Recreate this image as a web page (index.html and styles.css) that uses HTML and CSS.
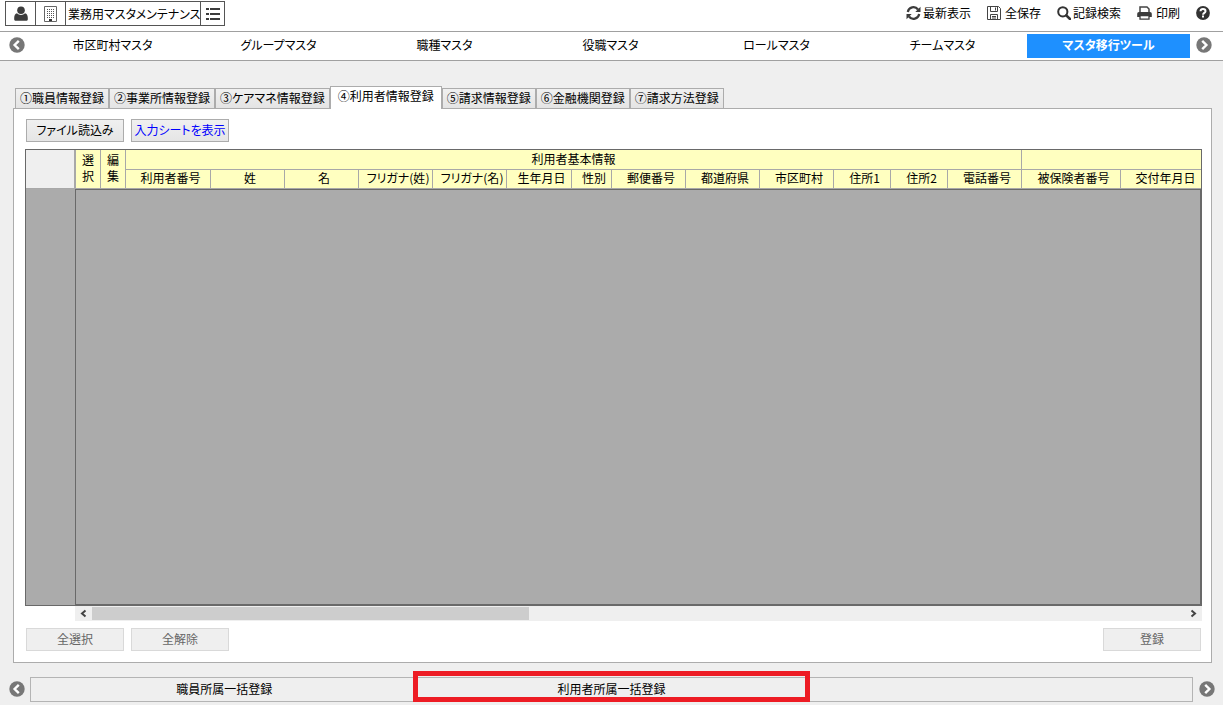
FILE: index.html
```html
<!DOCTYPE html>
<html lang="ja">
  <head>
    <meta charset="UTF-8" />
    <meta name="viewport" content="width=device-width, initial-scale=1.0" />
    <title>業務用マスタメンテナンス</title>
    <link rel="stylesheet" href="styles.css">
  </head>
  <body>
    <header class="topbar">
      <div class="title-group">
        <button type="button" class="title-btn" aria-label="職員">
          <svg width="16" height="16" viewBox="0 0 16 16" fill="#3c3c3c"><circle cx="8" cy="4.3" r="3.8" /><path d="M4 7.300C2.200 7.800 1.200 9.400 1.200 12v1.200c0 1 .8 1.600 1.800 1.600h10c1 0 1.800-.6 1.800-1.600V12c0-2.600-1-4.200-2.800-4.700C10.900 8.400 9.500 9 8 9s-2.900-.6-4-1.700z" /></svg>
        </button>
        <button type="button" class="title-btn" aria-label="事業所">
          <svg width="13" height="16" viewBox="0 0 13 16"><path d="M.5 .5h12v15H.5z" fill="#fff" stroke="#666" /><path d="M3 3.500h8M3 5.500h8M3 7.500h8M3 9.500h8M3 11.500h8" stroke="#555" stroke-dasharray="1 1" /><path d="M5 13h3v2H5z" fill="#333" /></svg>
        </button>
        <h1 class="title">業務用マスタメンテナンス</h1>
        <button type="button" class="title-btn list-btn" aria-label="一覧">
          <svg width="14" height="12" viewBox="0 0 14 12" fill="#3c3c3c"><path d="M0 0h3v2H0zM4 0h10v2H4zM0 5h3v2H0zM4 5h10v2H4zM0 10h3v2H0zM4 10h10v2H4z" /></svg>
        </button>
      </div>
      <div class="tools">
        <button type="button" class="tool">
          <svg width="15" height="14" viewBox="0 0 15 14"><path d="M1.800 6A5.700 5.700 0 0 1 12 3.500M13.200 8A5.700 5.700 0 0 1 3 10.500" fill="none" stroke="#3c3c3c" stroke-width="2.200" /><path d="M14.500 .8v5.200H9.300zM.5 13.200V8h5.200z" fill="#3c3c3c" /></svg>
          最新表示
        </button>
        <button type="button" class="tool save">
          <svg width="14" height="14" viewBox="0 0 14 14" fill="none" stroke="#444"><path d="M.5 .5h11l2 2v11H.5zM3.500 .5v5h7v-5M3.500 13.500v-5h7v5" /><path d="M8.500 1.500v3M5 10.500h4M5 12h4" /></svg>
          全保存
        </button>
        <button type="button" class="tool">
          <svg width="14" height="14" viewBox="0 0 14 14" fill="none" stroke="#333"><circle cx="5.800" cy="5.800" r="4.600" stroke-width="2" /><path d="M9.300 9.300l3.700 3.700" stroke-width="2.500" stroke-linecap="round" /></svg>
          記録検索
        </button>
        <button type="button" class="tool print">
          <svg width="15" height="14" viewBox="0 0 15 14"><path d="M3 6V1h7l2 2v3" fill="none" stroke="#444" stroke-width="1.500" /><path d="M2 6h11a1.800 1.800 0 0 1 1.800 1.800V11H.2V7.800A1.800 1.800 0 0 1 2 6z" fill="#3c3c3c" /><path d="M3 9.500h9v3.700H3z" fill="#fff" stroke="#3c3c3c" stroke-width="1.300" /></svg>
          印刷
        </button>
        <button type="button" class="tool" aria-label="ヘルプ">
          <svg width="14" height="14" viewBox="0 0 14 14"><circle cx="7" cy="7" r="6.900" fill="#333" /><path d="M4.500 5.300C4.600 3.900 5.600 3.100 7 3.100c1.400 0 2.500.8 2.500 2.100 0 1.700-2.400 1.700-2.400 3.500" fill="none" stroke="#fff" stroke-width="2" /><path d="M6 9.600h2v1.800H6z" fill="#fff" /></svg>
        </button>
      </div>
    </header>

    <nav class="master-nav">
      <button type="button" class="arrow" aria-label="前へ">
        <svg width="16" height="16" viewBox="0 0 16 16"><circle cx="8" cy="8" r="7.700" fill="#777" /><path d="M9.800 3.800L5.600 8l4.200 4.200" fill="none" stroke="#fff" stroke-width="2.400" /></svg>
      </button>
      <div class="master-list">
        <a href="#" class="master">市区町村マスタ</a>
        <a href="#" class="master">グループマスタ</a>
        <a href="#" class="master">職種マスタ</a>
        <a href="#" class="master">役職マスタ</a>
        <a href="#" class="master">ロールマスタ</a>
        <a href="#" class="master">チームマスタ</a>
        <a href="#" class="master active">マスタ移行ツール</a>
      </div>
      <button type="button" class="arrow next" aria-label="次へ">
        <svg width="16" height="16" viewBox="0 0 16 16"><circle cx="8" cy="8" r="7.700" fill="#777" /><path d="M6.200 3.800L10.400 8l-4.200 4.200" fill="none" stroke="#fff" stroke-width="2.400" /></svg>
      </button>
    </nav>

    <main class="content">
      <div class="tabs" role="tablist">
        <button type="button" class="tab" role="tab">①職員情報登録</button>
        <button type="button" class="tab" role="tab">②事業所情報登録</button>
        <button type="button" class="tab" role="tab">③ケアマネ情報登録</button>
        <button type="button" class="tab active" role="tab" aria-selected="true">④利用者情報登録</button>
        <button type="button" class="tab" role="tab">⑤請求情報登録</button>
        <button type="button" class="tab" role="tab">⑥金融機関登録</button>
        <button type="button" class="tab" role="tab">⑦請求方法登録</button>
      </div>

      <section class="panel">
        <div class="actions">
          <button type="button" class="btn">ファイル読込み</button>
          <button type="button" class="btn sheet">入力シートを表示</button>
        </div>

        <div class="grid">
          <table class="grid-head">
            <colgroup>
              <col class="w-row" />
              <col class="w-check" span="2" />
              <col class="w-number" />
              <col class="w-text" span="4" />
              <col class="w-birth" />
              <col class="w-sex" />
              <col class="w-text" span="3" />
              <col class="w-address" span="2" />
              <col class="w-text" />
              <col class="w-insured" />
              <col class="w-date" />
            </colgroup>
            <thead>
              <tr>
                <td rowspan="2" class="corner"></td>
                <th rowspan="2" class="check">選<br />択</th>
                <th rowspan="2" class="check">編<br />集</th>
                <th colspan="13" class="group">利用者基本情報</th>
                <th colspan="2" class="group"></th>
              </tr>
              <tr>
                <th>利用者番号</th>
                <th>姓</th>
                <th>名</th>
                <th>フリガナ(姓)</th>
                <th>フリガナ(名)</th>
                <th>生年月日</th>
                <th>性別</th>
                <th>郵便番号</th>
                <th>都道府県</th>
                <th>市区町村</th>
                <th>住所1</th>
                <th>住所2</th>
                <th>電話番号</th>
                <th>被保険者番号</th>
                <th>交付年月日</th>
              </tr>
            </thead>
          </table>
          <div class="grid-body">
            <div class="gutter"></div>
            <div class="canvas"></div>
          </div>
        </div>
        <div class="scrollbar">
          <svg class="scroll-arrow" width="17" height="15" viewBox="0 0 17 15"><path d="M10.500 4.500L7 7.500l3.500 3" fill="none" stroke="#444" stroke-width="2" /></svg>
          <div class="track"><div class="thumb"></div></div>
          <svg class="scroll-arrow" width="17" height="15" viewBox="0 0 17 15"><path d="M6.500 4.500L10 7.500l-3.500 3" fill="none" stroke="#444" stroke-width="2" /></svg>
        </div>

        <div class="actions bottom">
          <button type="button" class="btn" disabled>全選択</button>
          <button type="button" class="btn" disabled>全解除</button>
          <button type="button" class="btn submit" disabled>登録</button>
        </div>
      </section>
    </main>

    <footer class="footer-nav">
      <button type="button" class="arrow" aria-label="前へ">
        <svg width="16" height="16" viewBox="0 0 16 16"><circle cx="8" cy="8" r="7.700" fill="#777" /><path d="M9.800 3.800L5.600 8l4.200 4.200" fill="none" stroke="#fff" stroke-width="2.400" /></svg>
      </button>
      <div class="footer-list">
        <button type="button" class="footer-btn">職員所属一括登録</button>
        <button type="button" class="footer-btn marked">利用者所属一括登録</button>
        <div class="footer-btn"></div>
      </div>
      <button type="button" class="arrow next" aria-label="次へ">
        <svg width="16" height="16" viewBox="0 0 16 16"><circle cx="8" cy="8" r="7.700" fill="#777" /><path d="M6.200 3.800L10.400 8l-4.200 4.200" fill="none" stroke="#fff" stroke-width="2.400" /></svg>
      </button>
    </footer>
  </body>
</html>
```

FILE: styles.css
```css
* {
  margin: 0;
  padding: 0;
  box-sizing: border-box;
}

body {
  display: flex;
  flex-direction: column;
  min-height: 100vh;
  background-color: #efefef;
  border-right: 5px solid #ffffff;
  color: #000000;
  font-family: "Noto Sans CJK JP", sans-serif;
  font-size: 12px;
  line-height: 16px;
  font-feature-settings: "palt";
}

button {
  border: none;
  background: none;
  color: inherit;
  font: inherit;
  font-feature-settings: inherit;
  white-space: nowrap;
  cursor: pointer;
}

svg {
  display: block;
  flex-shrink: 0;
}

.topbar {
  display: flex;
  justify-content: space-between;
  align-items: flex-start;
  height: 31px;
  padding: 1px 13px 0 5px;
  background-color: #ffffff;
}

.title-group {
  display: flex;
  height: 25px;
  border: 1px solid #555555;
}

.title-btn {
  display: flex;
  justify-content: center;
  align-items: center;
  width: 30px;
  border-right: 1px solid #555555;
}

.title {
  padding-left: 2px;
  font-size: 12px;
  font-weight: normal;
  line-height: 23px;
  white-space: nowrap;
}

.list-btn {
  width: 24px;
  border-right: none;
  border-left: 1px solid #555555;
}

.tools {
  display: flex;
  gap: 16px;
  height: 24px;
}

.tool {
  display: flex;
  align-items: center;
  gap: 2px;
}

.save,
.print {
  gap: 4px;
}

.master-nav {
  display: flex;
  align-items: center;
  height: 30px;
  padding-right: 2px;
  background-color: #ffffff;
  border-top: 1px solid #a0a0a0;
  border-bottom: 1px solid #a0a0a0;
}

.arrow {
  display: flex;
  justify-content: center;
  align-items: center;
  width: 31px;
  padding: 0 0 2px 3px;
}

.next {
  padding: 0 3px 2px 0;
}

.master-list {
  display: flex;
  flex: 1;
  gap: 3px;
}

.master {
  flex: 1;
  padding-bottom: 2px;
  color: #000000;
  line-height: 22px;
  text-align: center;
  text-decoration: none;
  white-space: nowrap;
}

.master.active {
  background-color: #1e90ff;
  color: #ffffff;
  font-weight: bold;
}

.content {
  display: flex;
  flex-direction: column;
  flex: 1;
  padding: 25px 11px 0 13px;
}

.tabs {
  display: flex;
  align-items: flex-end;
  padding-left: 2px;
}

.tab {
  height: 20px;
  padding: 0 4px 2px;
  background: linear-gradient(#f0f0f0, #e4e4e4);
  border: 1px solid #acacac;
  border-bottom: none;
}

.tab.active {
  position: relative;
  height: 23px;
  padding: 0 7px 4px;
  margin-bottom: -1px;
  background: #ffffff;
}

.panel {
  display: flex;
  flex-direction: column;
  flex: 1;
  padding: 10px 9px 11px 11px;
  background-color: #ffffff;
  border: 1px solid #acacac;
}

.actions {
  display: flex;
  gap: 7px;
  padding: 0 1px 7px;
}

.btn {
  width: 98px;
  height: 23px;
  padding-bottom: 2px;
  background: linear-gradient(#f0f0f0, #e5e5e5);
  border: 1px solid #acacac;
}

.btn:disabled {
  background: #efefef;
  border-color: #d9d9d9;
  color: #666666;
  cursor: default;
}

.sheet {
  color: #0000ff;
}

.submit {
  margin-left: auto;
}

.bottom {
  padding: 7px 1px 0;
}

.grid {
  display: flex;
  flex-direction: column;
  flex: 1;
  overflow: hidden;
  border: 1px solid #696969;
}

.grid-head {
  width: 1180px;
  table-layout: fixed;
  border-spacing: 0;
}

.grid-head th {
  height: 19px;
  padding: 0 0 2px 5px;
  background-color: #ffffc0;
  border-right: 1px solid #a8a8a8;
  border-bottom: 1px solid #a8a8a8;
  font-weight: normal;
  white-space: nowrap;
}

.grid-head .group {
  height: 20px;
  padding-left: 0;
}

.grid-head .check {
  padding-left: 0;
}

.corner {
  background-color: #efefef;
  border-right: 2px solid #a8a8a8;
  border-bottom: 1px solid #a8a8a8;
}

.w-row {
  width: 50px;
}

.w-check {
  width: 25px;
}

.w-number {
  width: 85px;
}

.w-text {
  width: 74px;
}

.w-birth {
  width: 65px;
}

.w-sex {
  width: 40px;
}

.w-address {
  width: 57px;
}

.w-insured {
  width: 99px;
}

.w-date {
  width: 85px;
}

.grid-body {
  display: flex;
  flex: 1;
  background-color: #ababab;
}

.gutter {
  width: 49px;
}

.canvas {
  flex: 1;
  border: 1px solid #696969;
}

.scrollbar {
  display: flex;
  height: 15px;
  margin-left: 50px;
  background-color: #efefef;
}

.track {
  flex: 1;
  padding: 1px 0;
}

.thumb {
  width: 40%;
  height: 13px;
  background-color: #cdcdcd;
}

.footer-nav {
  display: flex;
  align-items: center;
  padding: 14px 0 3px;
}

.footer-nav .arrow {
  width: 30px;
}

.footer-list {
  display: flex;
  flex: 1;
  height: 25px;
  border: 1px solid #b4b4b4;
}

.footer-btn {
  flex: 1;
  padding-bottom: 2px;
}

.marked {
  position: relative;
  border: solid #b4b4b4;
  border-width: 0 1px;
}

/* red frame drawn over the button */
.marked::after {
  content: "";
  position: absolute;
  inset: -7px -5px -1px;
  border: 5px solid #ed1c24;
}
```
